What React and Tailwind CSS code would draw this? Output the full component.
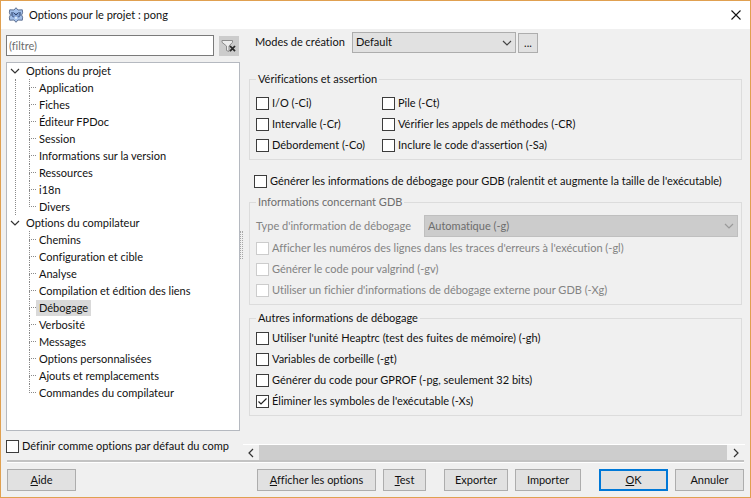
import React, { useState } from "react";

const treeData = [
  {
    title: "Options du projet",
    items: [
      "Application",
      "Fiches",
      "Éditeur FPDoc",
      "Session",
      "Informations sur la version",
      "Ressources",
      "i18n",
      "Divers",
    ],
  },
  {
    title: "Options du compilateur",
    items: [
      "Chemins",
      "Configuration et cible",
      "Analyse",
      "Compilation et édition des liens",
      "Débogage",
      "Verbosité",
      "Messages",
      "Options personnalisées",
      "Ajouts et remplacements",
      "Commandes du compilateur",
    ],
  },
];

const Chevron = ({ className }) => (
  <svg viewBox="0 0 10 6" fill="none" className={className}>
    <path d="M1 1l4 4 4-4" stroke="currentColor" strokeWidth="1.2" />
  </svg>
);

const Logo = () => (
  <svg viewBox="0 0 16 16" className="h-4 w-4">
    <path
      d="M8 .7L10 3l4.300-.2.3 3L13.600 8l1 2.200-.3 3L10 13l-2 2.300L6 13l-4.300.2-.3-3L2.400 8l-1-2.200.3-3L6 3z"
      fill="#a3c0ea"
      stroke="#5f7294"
      strokeWidth="1"
      strokeLinejoin="round"
    />
    <path
      d="M3.500 4.800l2 .9h5l2-.9v3.400L11 11H5L3.500 8.200z"
      fill="#7f9fd2"
    />
    <path
      d="M4 5v3.500l1.500 1.500M12 5v3.500L10.500 10M5.500 5.500L8 8l2.500-2.500"
      stroke="#34486f"
      fill="none"
    />
    <path d="M6.300 10.800L8 9.200l1.700 1.600L8 12.300z" fill="#dce9fb" />
  </svg>
);

const CheckOption = ({ label, checked = false, disabled = false }) => {
  const [on, setOn] = useState(checked);

  return (
    <label
      className={`flex h-[21px] items-center gap-[3px] overflow-hidden whitespace-nowrap ${
        disabled ? "text-[#838383]" : "text-[#111111]"
      }`}
    >
      <span className="grid shrink-0">
        <input
          type="checkbox"
          checked={on}
          disabled={disabled}
          onChange={() => setOn(!on)}
          className="col-start-1 row-start-1 h-[13px] w-[13px] appearance-none border border-[#3c3c3c] bg-white disabled:border-[#cccccc]"
        />
        {on && (
          <svg
            viewBox="0 0 13 13"
            fill="none"
            className="pointer-events-none col-start-1 row-start-1 h-[13px] w-[13px]"
          >
            <path d="M2.5 6.5L5 9l5.5-5.5" stroke="#222222" strokeWidth="1.2" />
          </svg>
        )}
      </span>
      {label}
    </label>
  );
};

const Group = ({ title, disabled, className, children }) => (
  <fieldset
    className={`min-w-0 border border-[#dcdcdc] px-[6px] pb-[3px] ${className}`}
  >
    <legend
      className={`h-4 px-[2px] leading-4 ${disabled ? "text-[#6d6d6d]" : ""}`}
    >
      {title}
    </legend>
    {children}
  </fieldset>
);

const DialogButton = ({ primary, className, children }) => (
  <button
    type="button"
    className={`h-[22px] bg-[#e1e1e1] ${
      primary ? "border-2 border-[#0078d7]" : "border border-[#adadad]"
    } ${className}`}
  >
    {children}
  </button>
);

const TreeGroup = ({ group, last, selected, onSelect }) => {
  const [open, setOpen] = useState(true);

  return (
    <li>
      <button
        type="button"
        onClick={() => setOpen(!open)}
        className="flex h-4 items-center gap-[6px]"
      >
        <Chevron
          className={`h-[6px] w-[10px] text-[#333333] ${open ? "" : "-rotate-90"}`}
        />
        {group.title}
      </button>
      {open && (
        <ul
          className={`ml-[5px] border-l border-dotted pl-[13px] ${
            last ? "border-transparent" : "border-[#8a8a8a]"
          }`}
        >
          {group.items.map((item, index) => (
            <li key={item} className="flex h-[17px] items-center">
              <span className="flex w-[7px] flex-col self-stretch">
                <span className="h-[9px] border-b border-l border-dotted border-[#8a8a8a]" />
                {index < group.items.length - 1 && (
                  <span className="flex-1 border-l border-dotted border-[#8a8a8a]" />
                )}
              </span>
              <button
                type="button"
                onClick={() => onSelect(item)}
                className={`h-4 px-[3px] leading-4 ${
                  item === selected ? "bg-[#d9d9d9]" : ""
                }`}
              >
                {item}
              </button>
            </li>
          ))}
        </ul>
      )}
    </li>
  );
};

const Sidebar = () => {
  const [filter, setFilter] = useState("");
  const [selected, setSelected] = useState("Débogage");

  return (
    <aside className="flex w-[234px] shrink-0 flex-col pt-[6px]">
      <div className="flex items-center justify-between">
        <input
          type="text"
          aria-label="filtre"
          placeholder="(filtre)"
          value={filter}
          onChange={(e) => setFilter(e.target.value)}
          className="h-[21px] w-[208px] border border-[#7a7a7a] bg-white px-[2px] placeholder:text-[#6d6d6d]"
        />
        <button
          type="button"
          aria-label="Effacer"
          className="mr-px flex h-5 w-5 items-center justify-center bg-[#cccccc]"
        >
          <svg viewBox="0 0 16 14" fill="none" className="h-[14px] w-4">
            <path
              d="M1 1.5h10.5v1.8L8 7v5.5l-2.5-1V7L1 3.3z"
              fill="#ececec"
              stroke="#8c8c8c"
            />
            <path d="M9 7l5 5.2M14 7l-5 5.2" stroke="#2b2b2b" strokeWidth="1.8" />
          </svg>
        </button>
      </div>
      <ul className="mt-[6px] flex-1 border border-[#b5b9c0] bg-white pl-[3px]">
        {treeData.map((group, index) => (
          <TreeGroup
            key={group.title}
            group={group}
            last={index === treeData.length - 1}
            selected={selected}
            onSelect={setSelected}
          />
        ))}
      </ul>
      <div className="mt-[5px] mr-[6px] mb-[3px]">
        <CheckOption label="Définir comme options par défaut du comp" />
      </div>
    </aside>
  );
};

const DebugPanel = () => (
  <div className="flex-1 pr-[3px] pl-[6px]">
    <div className="flex h-[25px] items-center pl-[6px]">
      <label htmlFor="mode" className="w-[97px]">
        Modes de création
      </label>
      <div className="relative">
        <select
          id="mode"
          className="block h-[21px] w-[164px] appearance-none border border-[#adadad] bg-[#e1e1e1] px-[3px]"
        >
          <option>Default</option>
        </select>
        <Chevron className="pointer-events-none absolute top-[8px] right-[4px] h-[6px] w-[10px] text-[#444444]" />
      </div>
      <button
        type="button"
        className="ml-[2px] h-5 w-5 border border-[#adadad] bg-[#e1e1e1] leading-4"
      >
        ...
      </button>
    </div>

    <Group title="Vérifications et assertion" className="mt-4 pt-[6px]">
      <div className="grid grid-cols-[126px_1fr]">
        <CheckOption label="I/O (-Ci)" />
        <CheckOption label="Pile (-Ct)" />
        <CheckOption label="Intervalle (-Cr)" />
        <CheckOption label="Vérifier les appels de méthodes (-CR)" />
        <CheckOption label="Débordement (-Co)" />
        <CheckOption label="Inclure le code d'assertion (-Sa)" />
      </div>
    </Group>

    <div className="mt-[11px] mb-[2px] pl-[5px]">
      <CheckOption label="Générer les informations de débogage pour GDB (ralentit et augmente la taille de l'exécutable)" />
    </div>

    <Group title="Informations concernant GDB" disabled className="pt-[5px]">
      <div className="mb-px flex items-center text-[#838383]">
        <label htmlFor="debug-type" className="w-[168px] shrink-0">
          Type d'information de débogage
        </label>
        <div className="relative -mr-[3px] flex-1">
          <select
            id="debug-type"
            disabled
            className="block h-[22px] w-full appearance-none border border-[#bfbfbf] bg-[#cccccc] px-[3px] text-[#6d6d6d] opacity-100"
          >
            <option>Automatique (-g)</option>
          </select>
          <Chevron className="pointer-events-none absolute top-[8px] right-[4px] h-[6px] w-[10px] text-[#9a9a9a]" />
        </div>
      </div>
      <CheckOption
        disabled
        label="Afficher les numéros des lignes dans les traces d'erreurs à l'exécution (-gl)"
      />
      <CheckOption disabled label="Générer le code pour valgrind (-gv)" />
      <CheckOption
        disabled
        label="Utiliser un fichier d'informations de débogage externe pour GDB (-Xg)"
      />
    </Group>

    <Group title="Autres informations de débogage" className="mt-[5px] pt-[2px]">
      <CheckOption label="Utiliser l'unité Heaptrc (test des fuites de mémoire) (-gh)" />
      <CheckOption label="Variables de corbeille (-gt)" />
      <CheckOption label="Générer du code pour GPROF (-pg, seulement 32 bits)" />
      <CheckOption checked label="Éliminer les symboles de l'exécutable (-Xs)" />
    </Group>
  </div>
);

const ScrollBar = () => (
  <div className="flex h-4 items-stretch border-t border-white">
    <button
      type="button"
      aria-label="Défiler à gauche"
      className="flex w-4 items-center justify-center"
    >
      <Chevron className="h-[6px] w-[10px] rotate-90 text-[#333333]" />
    </button>
    <div className="flex-1 bg-[#cdcdcd]" />
    <button
      type="button"
      aria-label="Défiler à droite"
      className="flex w-[18px] items-center justify-center"
    >
      <Chevron className="h-[6px] w-[10px] -rotate-90 text-[#333333]" />
    </button>
  </div>
);

const App = () => {
  return (
    <div className="flex min-h-screen flex-col border border-[#e0a050] bg-[#f0f0f0] font-['Lato','Open_Sans',sans-serif] text-[11px] text-[#111111] [font-variant-ligatures:none]">
      <header className="flex h-7 items-center justify-between bg-white pr-[9px] pl-[7px]">
        <div className="flex items-center gap-[5px]">
          <Logo />
          <h1>Options pour le projet : pong</h1>
        </div>
        <button type="button" aria-label="Fermer">
          <svg viewBox="0 0 10 10" fill="none" className="h-[10px] w-[10px]">
            <path d="M.5.5l9 9M9.5.5l-9 9" stroke="#111111" strokeWidth="1.1" />
          </svg>
        </button>
      </header>

      <main className="flex flex-1 px-[5px]">
        <Sidebar />
        <div className="flex w-[3px] flex-col justify-center">
          <div className="h-7 border-x border-dotted border-[#a8a8a8]" />
        </div>
        <div className="flex min-w-0 flex-1 flex-col pt-px">
          <DebugPanel />
          <ScrollBar />
        </div>
      </main>

      <footer className="mx-[6px] border-t-2 border-[#c3c3c3]">
        <div className="flex items-center border-t border-white py-[6px]">
          <DialogButton className="mr-auto w-[69px]">
            <u>A</u>ide
          </DialogButton>
          <DialogButton className="mr-[7px] w-[119px]">
            <u>A</u>fficher les options
          </DialogButton>
          <DialogButton className="mr-[18px] w-[43px]">
            <u>T</u>est
          </DialogButton>
          <DialogButton className="mr-[7px] w-16">Exporter</DialogButton>
          <DialogButton className="mr-[18px] w-[66px]">Importer</DialogButton>
          <DialogButton primary className="mr-[7px] w-[69px]">
            <u>O</u>K
          </DialogButton>
          <DialogButton className="w-[69px]">Annuler</DialogButton>
        </div>
      </footer>
    </div>
  );
};

export default App;
